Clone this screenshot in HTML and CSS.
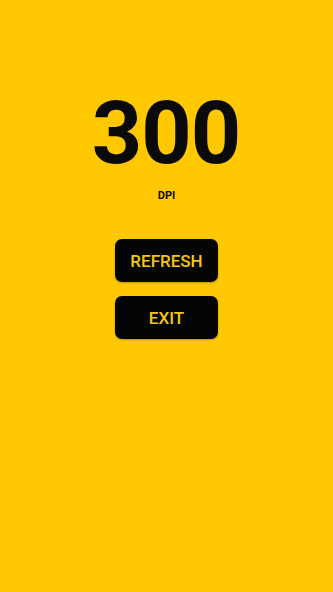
FILE: index.html
```html
<!DOCTYPE html>
<html>
<head>
<meta charset="utf-8">
<link rel="stylesheet" href="styles.css">
</head>
<body>
<main class="screen">
  <div class="value">300</div>
  <div class="unit">DPI</div>
  <div class="actions">
    <button class="btn">REFRESH</button>
    <button class="btn">EXIT</button>
  </div>
</main>
</body>
</html>
```
FILE: styles.css
```css
html, body {
  margin: 0;
  padding: 0;
  height: 100%;
  background: #ffc800;
}
.screen {
  display: flex;
  flex-direction: column;
  align-items: center;
  font-family: Roboto, "Liberation Sans", sans-serif;
  padding-top: 87px;
}
.value {
  font-size: 88px;
  font-weight: 700;
  line-height: 92px;
  letter-spacing: -1px;
  text-indent: -1px;
  color: #0a0a0a;
}
.unit {
  margin-top: 10px;
  font-size: 11px;
  font-weight: 700;
  line-height: 13px;
  color: #0a0a0a;
}
.actions {
  margin-top: 37px;
  display: flex;
  flex-direction: column;
  gap: 14px;
}
.btn {
  width: 103px;
  height: 43px;
  border: none;
  border-radius: 7px;
  background: #050505;
  color: #f5c518;
  font-family: Roboto, "Liberation Sans", sans-serif;
  font-size: 17px;
  font-weight: 500;
  padding: 0;
  box-shadow: 0 1px 2px rgba(0,0,0,0.25);
}
```
